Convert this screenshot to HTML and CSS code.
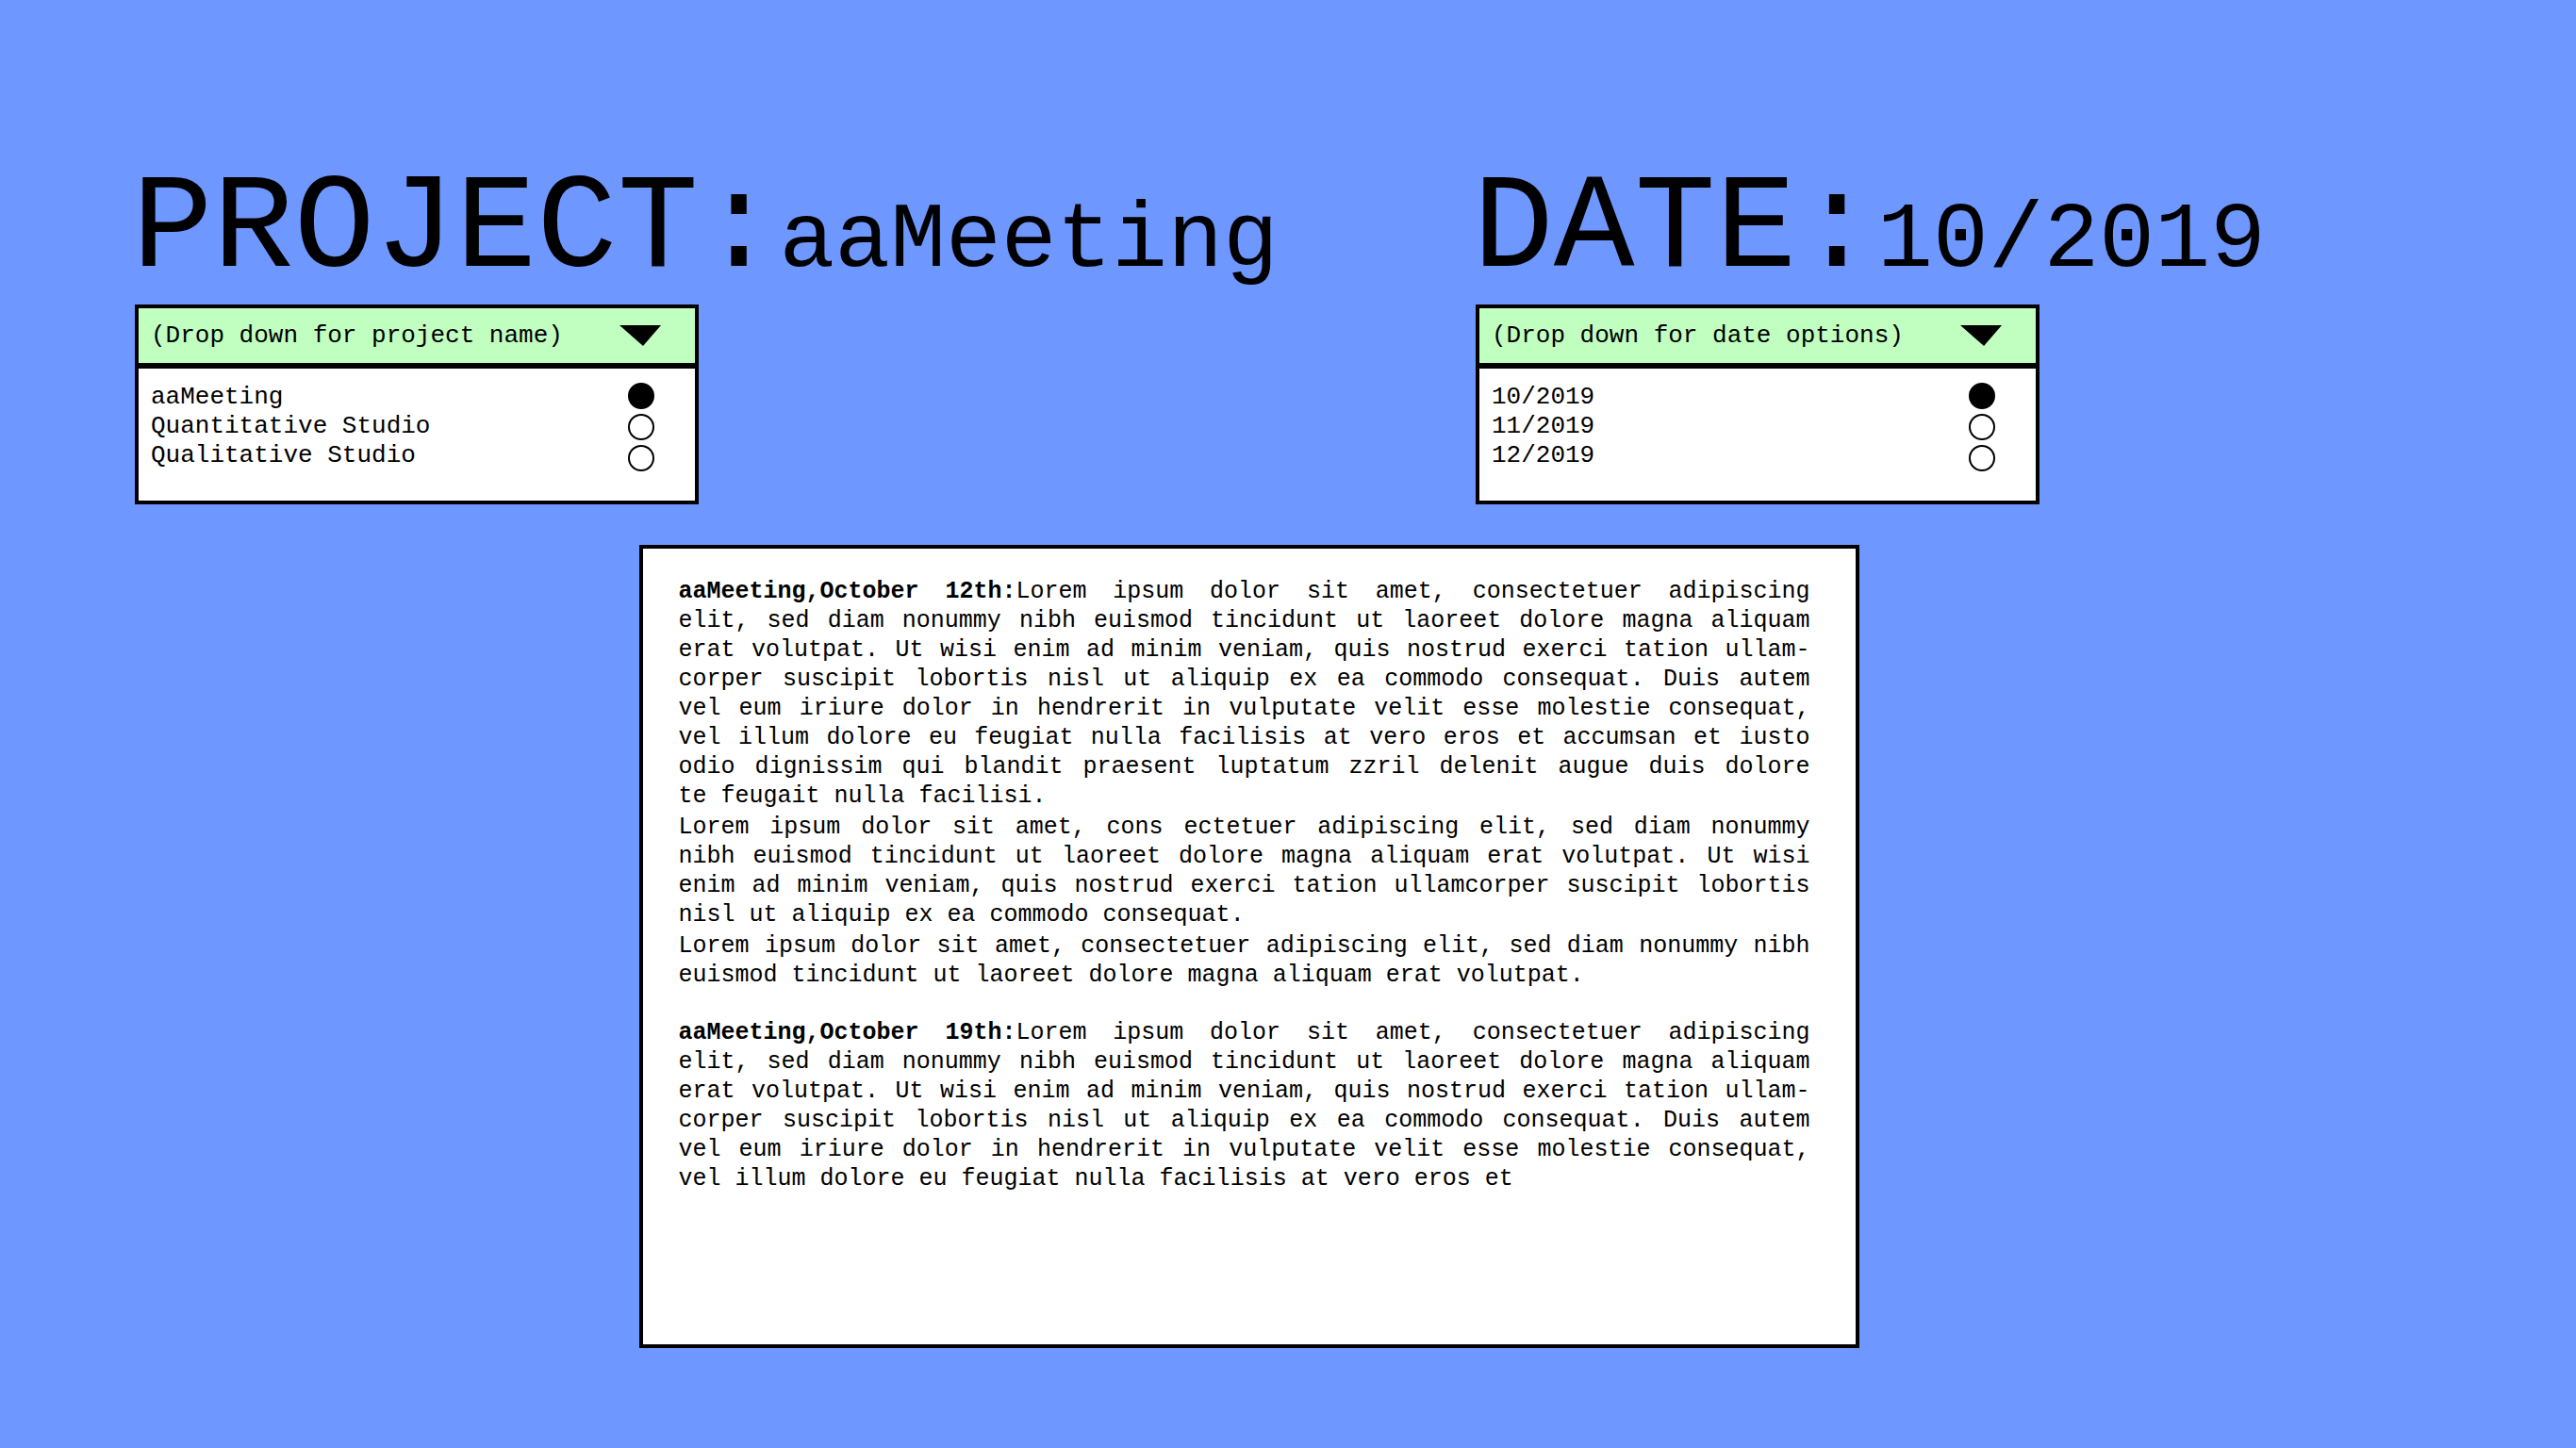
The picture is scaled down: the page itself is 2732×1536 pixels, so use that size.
FILE: index.html
```html
<!DOCTYPE html>
<html lang="en">
<head>
<meta charset="utf-8">
<meta name="viewport" content="width=device-width, initial-scale=1">
<title>Meeting notes</title>
<link rel="stylesheet" href="styles.css">
</head>
<body>
<main class="page">
  <div class="filters">
    <section class="filter">
      <h1 class="title">PROJECT:<span class="title-value">aaMeeting</span></h1>
      <div class="picker">
        <button class="picker-toggle" type="button" aria-expanded="true" aria-controls="project-options">
          <span>(Drop down for project name)</span>
          <svg class="arrow" viewBox="0 0 44 22" aria-hidden="true"><polygon points="0,0 44,0 25,22"/></svg>
        </button>
        <div class="options" id="project-options">
          <div class="option-names">
            <label for="project-1">aaMeeting</label>
            <label for="project-2">Quantitative Studio</label>
            <label for="project-3">Qualitative Studio</label>
          </div>
          <div class="option-marks">
            <input class="mark" type="radio" name="project" id="project-1" checked>
            <input class="mark" type="radio" name="project" id="project-2">
            <input class="mark" type="radio" name="project" id="project-3">
          </div>
        </div>
      </div>
    </section>
    <section class="filter">
      <h1 class="title">DATE:<span class="title-value">10/2019</span></h1>
      <div class="picker">
        <button class="picker-toggle" type="button" aria-expanded="true" aria-controls="date-options">
          <span>(Drop down for date options)</span>
          <svg class="arrow" viewBox="0 0 44 22" aria-hidden="true"><polygon points="0,0 44,0 25,22"/></svg>
        </button>
        <div class="options" id="date-options">
          <div class="option-names">
            <label for="date-1">10/2019</label>
            <label for="date-2">11/2019</label>
            <label for="date-3">12/2019</label>
          </div>
          <div class="option-marks">
            <input class="mark" type="radio" name="date" id="date-1" checked>
            <input class="mark" type="radio" name="date" id="date-2">
            <input class="mark" type="radio" name="date" id="date-3">
          </div>
        </div>
      </div>
    </section>
  </div>

  <section class="notes">
    <article class="note">
      <p><b>aaMeeting,October 12th:</b>Lorem ipsum dolor sit amet, consectetuer adipiscing<br>
      elit, sed diam nonummy nibh euismod tincidunt ut laoreet dolore magna aliquam<br>
      erat volutpat. Ut wisi enim ad minim veniam, quis nostrud exerci tation ullam-<br>
      corper suscipit lobortis nisl ut aliquip ex ea commodo consequat. Duis autem<br>
      vel eum iriure dolor in hendrerit in vulputate velit esse molestie consequat,<br>
      vel illum dolore eu feugiat nulla facilisis at vero eros et accumsan et iusto<br>
      odio dignissim qui blandit praesent luptatum zzril delenit augue duis dolore
      <span class="tail">te feugait nulla facilisi.</span></p>
      <p>Lorem ipsum dolor sit amet, cons ectetuer adipiscing elit, sed diam nonummy<br>
      nibh euismod tincidunt ut laoreet dolore magna aliquam erat volutpat. Ut wisi<br>
      enim ad minim veniam, quis nostrud exerci tation ullamcorper suscipit lobortis
      <span class="tail">nisl ut aliquip ex ea commodo consequat.</span></p>
      <p>Lorem ipsum dolor sit amet, consectetuer adipiscing elit, sed diam nonummy nibh
      <span class="tail">euismod tincidunt ut laoreet dolore magna aliquam erat volutpat.</span></p>
    </article>
    <article class="note">
      <p><b>aaMeeting,October 19th:</b>Lorem ipsum dolor sit amet, consectetuer adipiscing<br>
      elit, sed diam nonummy nibh euismod tincidunt ut laoreet dolore magna aliquam<br>
      erat volutpat. Ut wisi enim ad minim veniam, quis nostrud exerci tation ullam-<br>
      corper suscipit lobortis nisl ut aliquip ex ea commodo consequat. Duis autem<br>
      vel eum iriure dolor in hendrerit in vulputate velit esse molestie consequat,
      <span class="tail">vel illum dolore eu feugiat nulla facilisis at vero eros et</span></p>
    </article>
  </section>
</main>
</body>
</html>
```

FILE: styles.css
```css
*,
*::before,
*::after {
  box-sizing: border-box;
}

body {
  margin: 0;
  min-height: 100vh;
  background: #6e97ff;
  color: #000;
  font-family: "Courier New", "Liberation Mono", monospace;
  font-size: 26px;
  line-height: 31px;
}

.page {
  padding: 172px 0 100px;
}

/* Project and date pickers */
.filters {
  display: grid;
  grid-template-columns: minmax(0, 1422fr) minmax(0, 1170fr);
  padding-left: 140px;
}

.title {
  margin: 0 0 7px;
  font-size: 143px;
  font-weight: 400;
  line-height: 144px;
  white-space: nowrap;
}

.title-value {
  font-size: 98px;
  line-height: 98px;
}

.picker {
  max-width: 598px;
  margin-left: 3px;
}

.picker-toggle {
  display: flex;
  align-items: center;
  justify-content: space-between;
  width: 100%;
  height: 66px;
  padding: 0 36px 0 13px;
  border: 4px solid #000;
  border-radius: 0;
  background: #c1ffc1;
  color: inherit;
  font: inherit;
  cursor: pointer;
}

.arrow {
  width: 44px;
  height: 22px;
}

.options {
  display: flex;
  justify-content: space-between;
  margin-top: -2px;
  padding: 15px 43px 31px 13px;
  border: 4px solid #000;
  background: #fff;
}

.option-names,
.option-marks {
  display: flex;
  flex-direction: column;
}

.option-marks {
  gap: 5px;
}

.mark {
  appearance: none;
  width: 28px;
  height: 28px;
  margin: 0;
  border: 2px solid #000;
  border-radius: 50%;
  background: #fff;
}

.mark:checked {
  background: #000;
}

/* Meeting notes */
.notes {
  display: flex;
  flex-direction: column;
  gap: 30px;
  max-width: 1294px;
  min-height: 852px;
  margin: 43px 0 0 24.8%;
  padding: 30px 48px 30px 38px;
  border: 4px solid #000;
  background: #fff;
  font-size: 25px;
}

.note {
  display: flex;
  flex-direction: column;
  gap: 2px;
}

.note p {
  margin: 0;
  text-align: justify;
  text-align-last: justify;
}

.tail {
  display: block;
  text-align-last: left;
}
```
